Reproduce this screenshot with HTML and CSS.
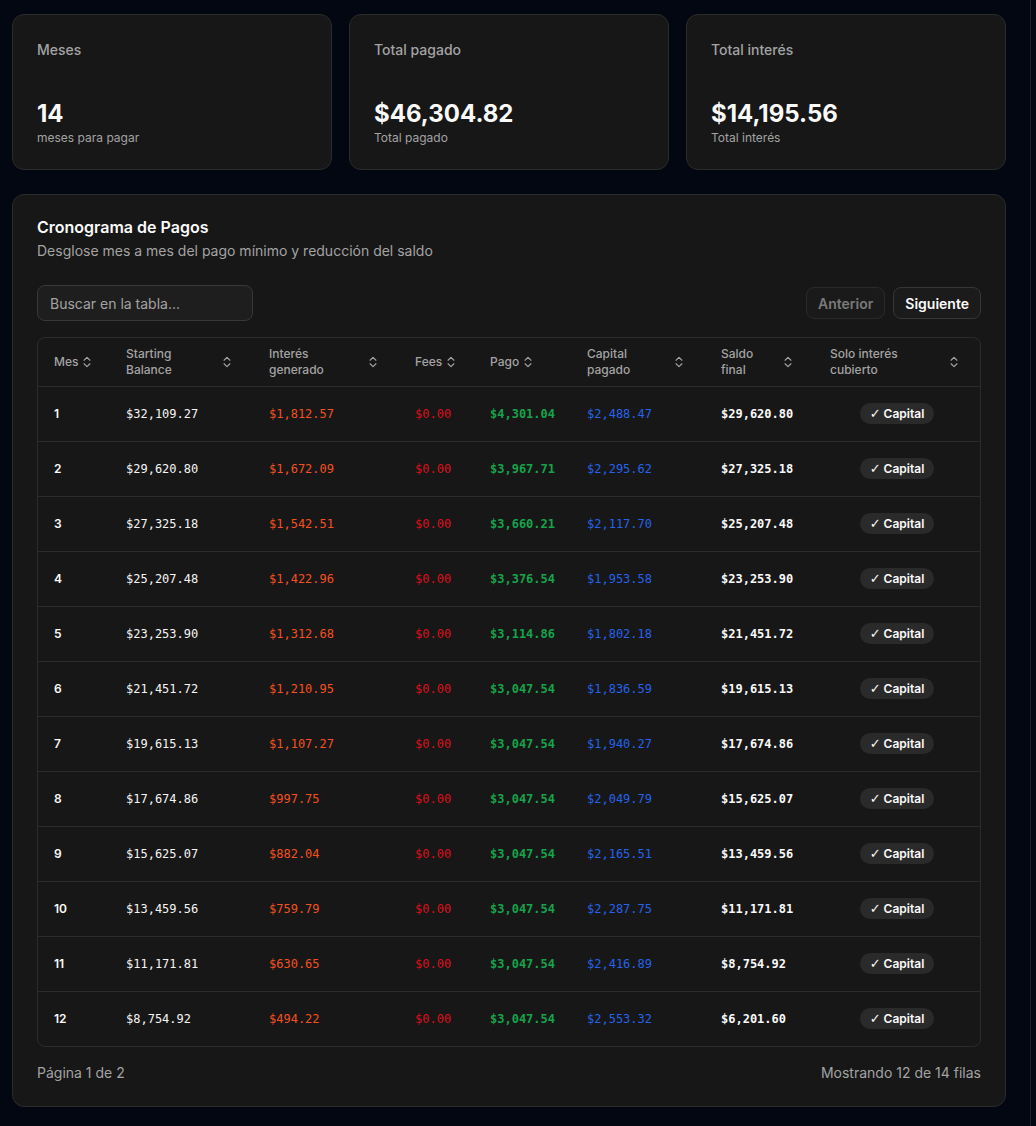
FILE: index.html
```html
<!DOCTYPE html>
<html lang="es">
<head>
<meta charset="utf-8">
<title>Cronograma de Pagos</title>
<link rel="stylesheet" href="styles.css">
</head>
<body>
<main class="page">
  <section class="stats">
    <div class="card stat">
      <div class="stat-label">Meses</div>
      <div class="stat-value">14</div>
      <div class="stat-sub">meses para pagar</div>
    </div>
    <div class="card stat">
      <div class="stat-label">Total pagado</div>
      <div class="stat-value">$46,304.82</div>
      <div class="stat-sub">Total pagado</div>
    </div>
    <div class="card stat">
      <div class="stat-label">Total interés</div>
      <div class="stat-value">$14,195.56</div>
      <div class="stat-sub">Total interés</div>
    </div>
  </section>

  <section class="card schedule">
    <header class="schedule-head">
      <h2 class="title">Cronograma de Pagos</h2>
      <p class="desc">Desglose mes a mes del pago mínimo y reducción del saldo</p>
    </header>
    <div class="schedule-body">
      <div class="toolbar">
        <input class="search" type="text" placeholder="Buscar en la tabla...">
        <div class="pager">
          <button class="btn btn-disabled" disabled>Anterior</button>
          <button class="btn">Siguiente</button>
        </div>
      </div>

      <div class="table-wrap">
        <table class="table">
          <colgroup>
            <col class="c-mes"><col class="c-start"><col class="c-int"><col class="c-fees"><col class="c-pago"><col class="c-cap"><col class="c-saldo"><col class="c-solo">
          </colgroup>
          <thead>
            <tr>
              <th><span class="th"><span>Mes</span><svg class="sort" viewBox="0 0 24 24"><path d="m7 15 5 5 5-5"/><path d="m7 9 5-5 5 5"/></svg></span></th>
              <th><span class="th th-wide"><span>Starting<br>Balance</span><svg class="sort" viewBox="0 0 24 24"><path d="m7 15 5 5 5-5"/><path d="m7 9 5-5 5 5"/></svg></span></th>
              <th><span class="th th-wide"><span>Interés<br>generado</span><svg class="sort" viewBox="0 0 24 24"><path d="m7 15 5 5 5-5"/><path d="m7 9 5-5 5 5"/></svg></span></th>
              <th><span class="th"><span>Fees</span><svg class="sort" viewBox="0 0 24 24"><path d="m7 15 5 5 5-5"/><path d="m7 9 5-5 5 5"/></svg></span></th>
              <th><span class="th"><span>Pago</span><svg class="sort" viewBox="0 0 24 24"><path d="m7 15 5 5 5-5"/><path d="m7 9 5-5 5 5"/></svg></span></th>
              <th><span class="th th-wide"><span>Capital<br>pagado</span><svg class="sort" viewBox="0 0 24 24"><path d="m7 15 5 5 5-5"/><path d="m7 9 5-5 5 5"/></svg></span></th>
              <th><span class="th th-wide"><span>Saldo<br>final</span><svg class="sort" viewBox="0 0 24 24"><path d="m7 15 5 5 5-5"/><path d="m7 9 5-5 5 5"/></svg></span></th>
              <th><span class="th th-wide"><span>Solo interés<br>cubierto</span><svg class="sort" viewBox="0 0 24 24"><path d="m7 15 5 5 5-5"/><path d="m7 9 5-5 5 5"/></svg></span></th>
            </tr>
          </thead>
          <tbody>
            <tr><td class="mes">1</td><td class="num start">$32,109.27</td><td class="num int">$1,812.57</td><td class="num fee">$0.00</td><td class="num pago">$4,301.04</td><td class="num cap">$2,488.47</td><td class="num saldo">$29,620.80</td><td class="badge-cell"><span class="badge"><span class="check">✓</span>Capital</span></td></tr>
            <tr><td class="mes">2</td><td class="num start">$29,620.80</td><td class="num int">$1,672.09</td><td class="num fee">$0.00</td><td class="num pago">$3,967.71</td><td class="num cap">$2,295.62</td><td class="num saldo">$27,325.18</td><td class="badge-cell"><span class="badge"><span class="check">✓</span>Capital</span></td></tr>
            <tr><td class="mes">3</td><td class="num start">$27,325.18</td><td class="num int">$1,542.51</td><td class="num fee">$0.00</td><td class="num pago">$3,660.21</td><td class="num cap">$2,117.70</td><td class="num saldo">$25,207.48</td><td class="badge-cell"><span class="badge"><span class="check">✓</span>Capital</span></td></tr>
            <tr><td class="mes">4</td><td class="num start">$25,207.48</td><td class="num int">$1,422.96</td><td class="num fee">$0.00</td><td class="num pago">$3,376.54</td><td class="num cap">$1,953.58</td><td class="num saldo">$23,253.90</td><td class="badge-cell"><span class="badge"><span class="check">✓</span>Capital</span></td></tr>
            <tr><td class="mes">5</td><td class="num start">$23,253.90</td><td class="num int">$1,312.68</td><td class="num fee">$0.00</td><td class="num pago">$3,114.86</td><td class="num cap">$1,802.18</td><td class="num saldo">$21,451.72</td><td class="badge-cell"><span class="badge"><span class="check">✓</span>Capital</span></td></tr>
            <tr><td class="mes">6</td><td class="num start">$21,451.72</td><td class="num int">$1,210.95</td><td class="num fee">$0.00</td><td class="num pago">$3,047.54</td><td class="num cap">$1,836.59</td><td class="num saldo">$19,615.13</td><td class="badge-cell"><span class="badge"><span class="check">✓</span>Capital</span></td></tr>
            <tr><td class="mes">7</td><td class="num start">$19,615.13</td><td class="num int">$1,107.27</td><td class="num fee">$0.00</td><td class="num pago">$3,047.54</td><td class="num cap">$1,940.27</td><td class="num saldo">$17,674.86</td><td class="badge-cell"><span class="badge"><span class="check">✓</span>Capital</span></td></tr>
            <tr><td class="mes">8</td><td class="num start">$17,674.86</td><td class="num int">$997.75</td><td class="num fee">$0.00</td><td class="num pago">$3,047.54</td><td class="num cap">$2,049.79</td><td class="num saldo">$15,625.07</td><td class="badge-cell"><span class="badge"><span class="check">✓</span>Capital</span></td></tr>
            <tr><td class="mes">9</td><td class="num start">$15,625.07</td><td class="num int">$882.04</td><td class="num fee">$0.00</td><td class="num pago">$3,047.54</td><td class="num cap">$2,165.51</td><td class="num saldo">$13,459.56</td><td class="badge-cell"><span class="badge"><span class="check">✓</span>Capital</span></td></tr>
            <tr><td class="mes">10</td><td class="num start">$13,459.56</td><td class="num int">$759.79</td><td class="num fee">$0.00</td><td class="num pago">$3,047.54</td><td class="num cap">$2,287.75</td><td class="num saldo">$11,171.81</td><td class="badge-cell"><span class="badge"><span class="check">✓</span>Capital</span></td></tr>
            <tr><td class="mes">11</td><td class="num start">$11,171.81</td><td class="num int">$630.65</td><td class="num fee">$0.00</td><td class="num pago">$3,047.54</td><td class="num cap">$2,416.89</td><td class="num saldo">$8,754.92</td><td class="badge-cell"><span class="badge"><span class="check">✓</span>Capital</span></td></tr>
            <tr><td class="mes">12</td><td class="num start">$8,754.92</td><td class="num int">$494.22</td><td class="num fee">$0.00</td><td class="num pago">$3,047.54</td><td class="num cap">$2,553.32</td><td class="num saldo">$6,201.60</td><td class="badge-cell"><span class="badge"><span class="check">✓</span>Capital</span></td></tr>
          </tbody>
        </table>
      </div>

      <footer class="table-foot">
        <span>Página 1 de 2</span>
        <span>Mostrando 12 de 14 filas</span>
      </footer>
    </div>
  </section>
</main>
</body>
</html>
```

FILE: styles.css
```css
* { box-sizing: border-box; }

html, body {
  margin: 0;
  padding: 0;
  background: #030712;
}

body {
  font-family: Inter, "Noto Sans", "Liberation Sans", sans-serif;
  color: #fafafa;
  display: flex;
  min-height: 1126px;
}

.page {
  width: 1031px;
  padding: 14px 24px 0 12px;
  border-right: 1px solid #1b212c;
  display: flex;
  flex-direction: column;
  gap: 24px;
}

.card {
  background: #171717;
  border: 1px solid #2b2b2b;
  border-radius: 12px;
}

.stats {
  display: grid;
  grid-template-columns: repeat(3, 1fr);
  gap: 17px;
}

.stat {
  padding: 25px 24px 23px;
  display: flex;
  flex-direction: column;
}

.stat-label {
  font-size: 14px;
  line-height: 20px;
  font-weight: 500;
  color: #a3a3a3;
  margin-bottom: 38px;
}

.stat-value {
  font-size: 24px;
  line-height: 32px;
  font-weight: 700;
  color: #fafafa;
}

.stat-sub {
  font-size: 12px;
  line-height: 16px;
  color: #a3a3a3;
}

.schedule-head {
  padding: 24px 24px 24px;
}

.title {
  margin: 0;
  font-size: 16px;
  line-height: 16px;
  font-weight: 600;
  color: #fafafa;
}

.desc {
  margin: 6px 0 0;
  font-size: 14px;
  line-height: 20px;
  color: #a3a3a3;
}

.schedule-body {
  padding: 0 24px 23px;
}

.toolbar {
  display: flex;
  align-items: center;
  justify-content: space-between;
  margin-bottom: 16px;
}

.search {
  width: 216px;
  height: 36px;
  padding: 0 12px;
  background: #1e1e1e;
  border: 1px solid #383838;
  border-radius: 8px;
  font-family: inherit;
  font-size: 14px;
  color: #fafafa;
  outline: none;
}

.search::placeholder { color: #a3a3a3; }

.pager {
  display: flex;
  gap: 8px;
}

.btn {
  height: 32px;
  padding: 0 11px;
  background: #1b1b1b;
  border: 1px solid #363636;
  border-radius: 8px;
  font-family: inherit;
  font-size: 14px;
  font-weight: 600;
  color: #fafafa;
}

.btn-disabled {
  color: #7a7a7a;
  border-color: #2a2a2a;
  background: #1a1a1a;
}

.table-wrap {
  border: 1px solid #2b2b2b;
  border-radius: 8px;
  overflow: hidden;
}

.table {
  width: 100%;
  border-collapse: collapse;
  table-layout: fixed;
}

.c-mes { width: 72px; }
.c-start { width: 143px; }
.c-int { width: 146px; }
.c-fees { width: 75px; }
.c-pago { width: 97px; }
.c-cap { width: 134px; }
.c-saldo { width: 109px; }
.c-solo { width: auto; }

.table th {
  height: 48px;
  padding: 0 16px;
  text-align: left;
  font-size: 12px;
  line-height: 16px;
  font-weight: 500;
  color: #a3a3a3;
  border-bottom: 1px solid #2b2b2b;
}

.th {
  display: inline-flex;
  align-items: center;
  gap: 2px;
}

.th-wide {
  display: flex;
  justify-content: space-between;
  padding-right: 3px;
}

.sort {
  width: 14px;
  height: 14px;
  fill: none;
  stroke: #a3a3a3;
  stroke-width: 2;
  stroke-linecap: round;
  stroke-linejoin: round;
  flex: none;
}

.table td {
  height: 55px;
  padding: 0 16px;
  font-size: 12px;
  border-bottom: 1px solid #2b2b2b;
  white-space: nowrap;
}

.table tbody tr:last-child td { border-bottom: none; }

.mes {
  font-weight: 600;
  color: #fafafa;
}

.num {
  font-family: "DejaVu Sans Mono", "Liberation Mono", monospace;
}

.start { color: #f5f5f5; }
.int { color: #f4511e; }
.fee { color: #dc0f1b; }
.pago { color: #16a34a; font-weight: 700; }
.cap { color: #2563eb; }
.saldo { color: #fafafa; font-weight: 700; }

.badge-cell { text-align: center; }

.badge {
  display: inline-flex;
  align-items: center;
  gap: 3px;
  height: 21px;
  padding: 0 10px;
  border-radius: 999px;
  background: #2a2a2a;
  font-size: 12px;
  font-weight: 600;
  color: #fafafa;
}

.check {
  font-family: "DejaVu Sans", sans-serif;
  font-size: 13px;
  font-weight: 700;
}

.table-foot {
  display: flex;
  justify-content: space-between;
  margin-top: 16px;
  font-size: 14px;
  line-height: 20px;
  color: #a3a3a3;
}
```
